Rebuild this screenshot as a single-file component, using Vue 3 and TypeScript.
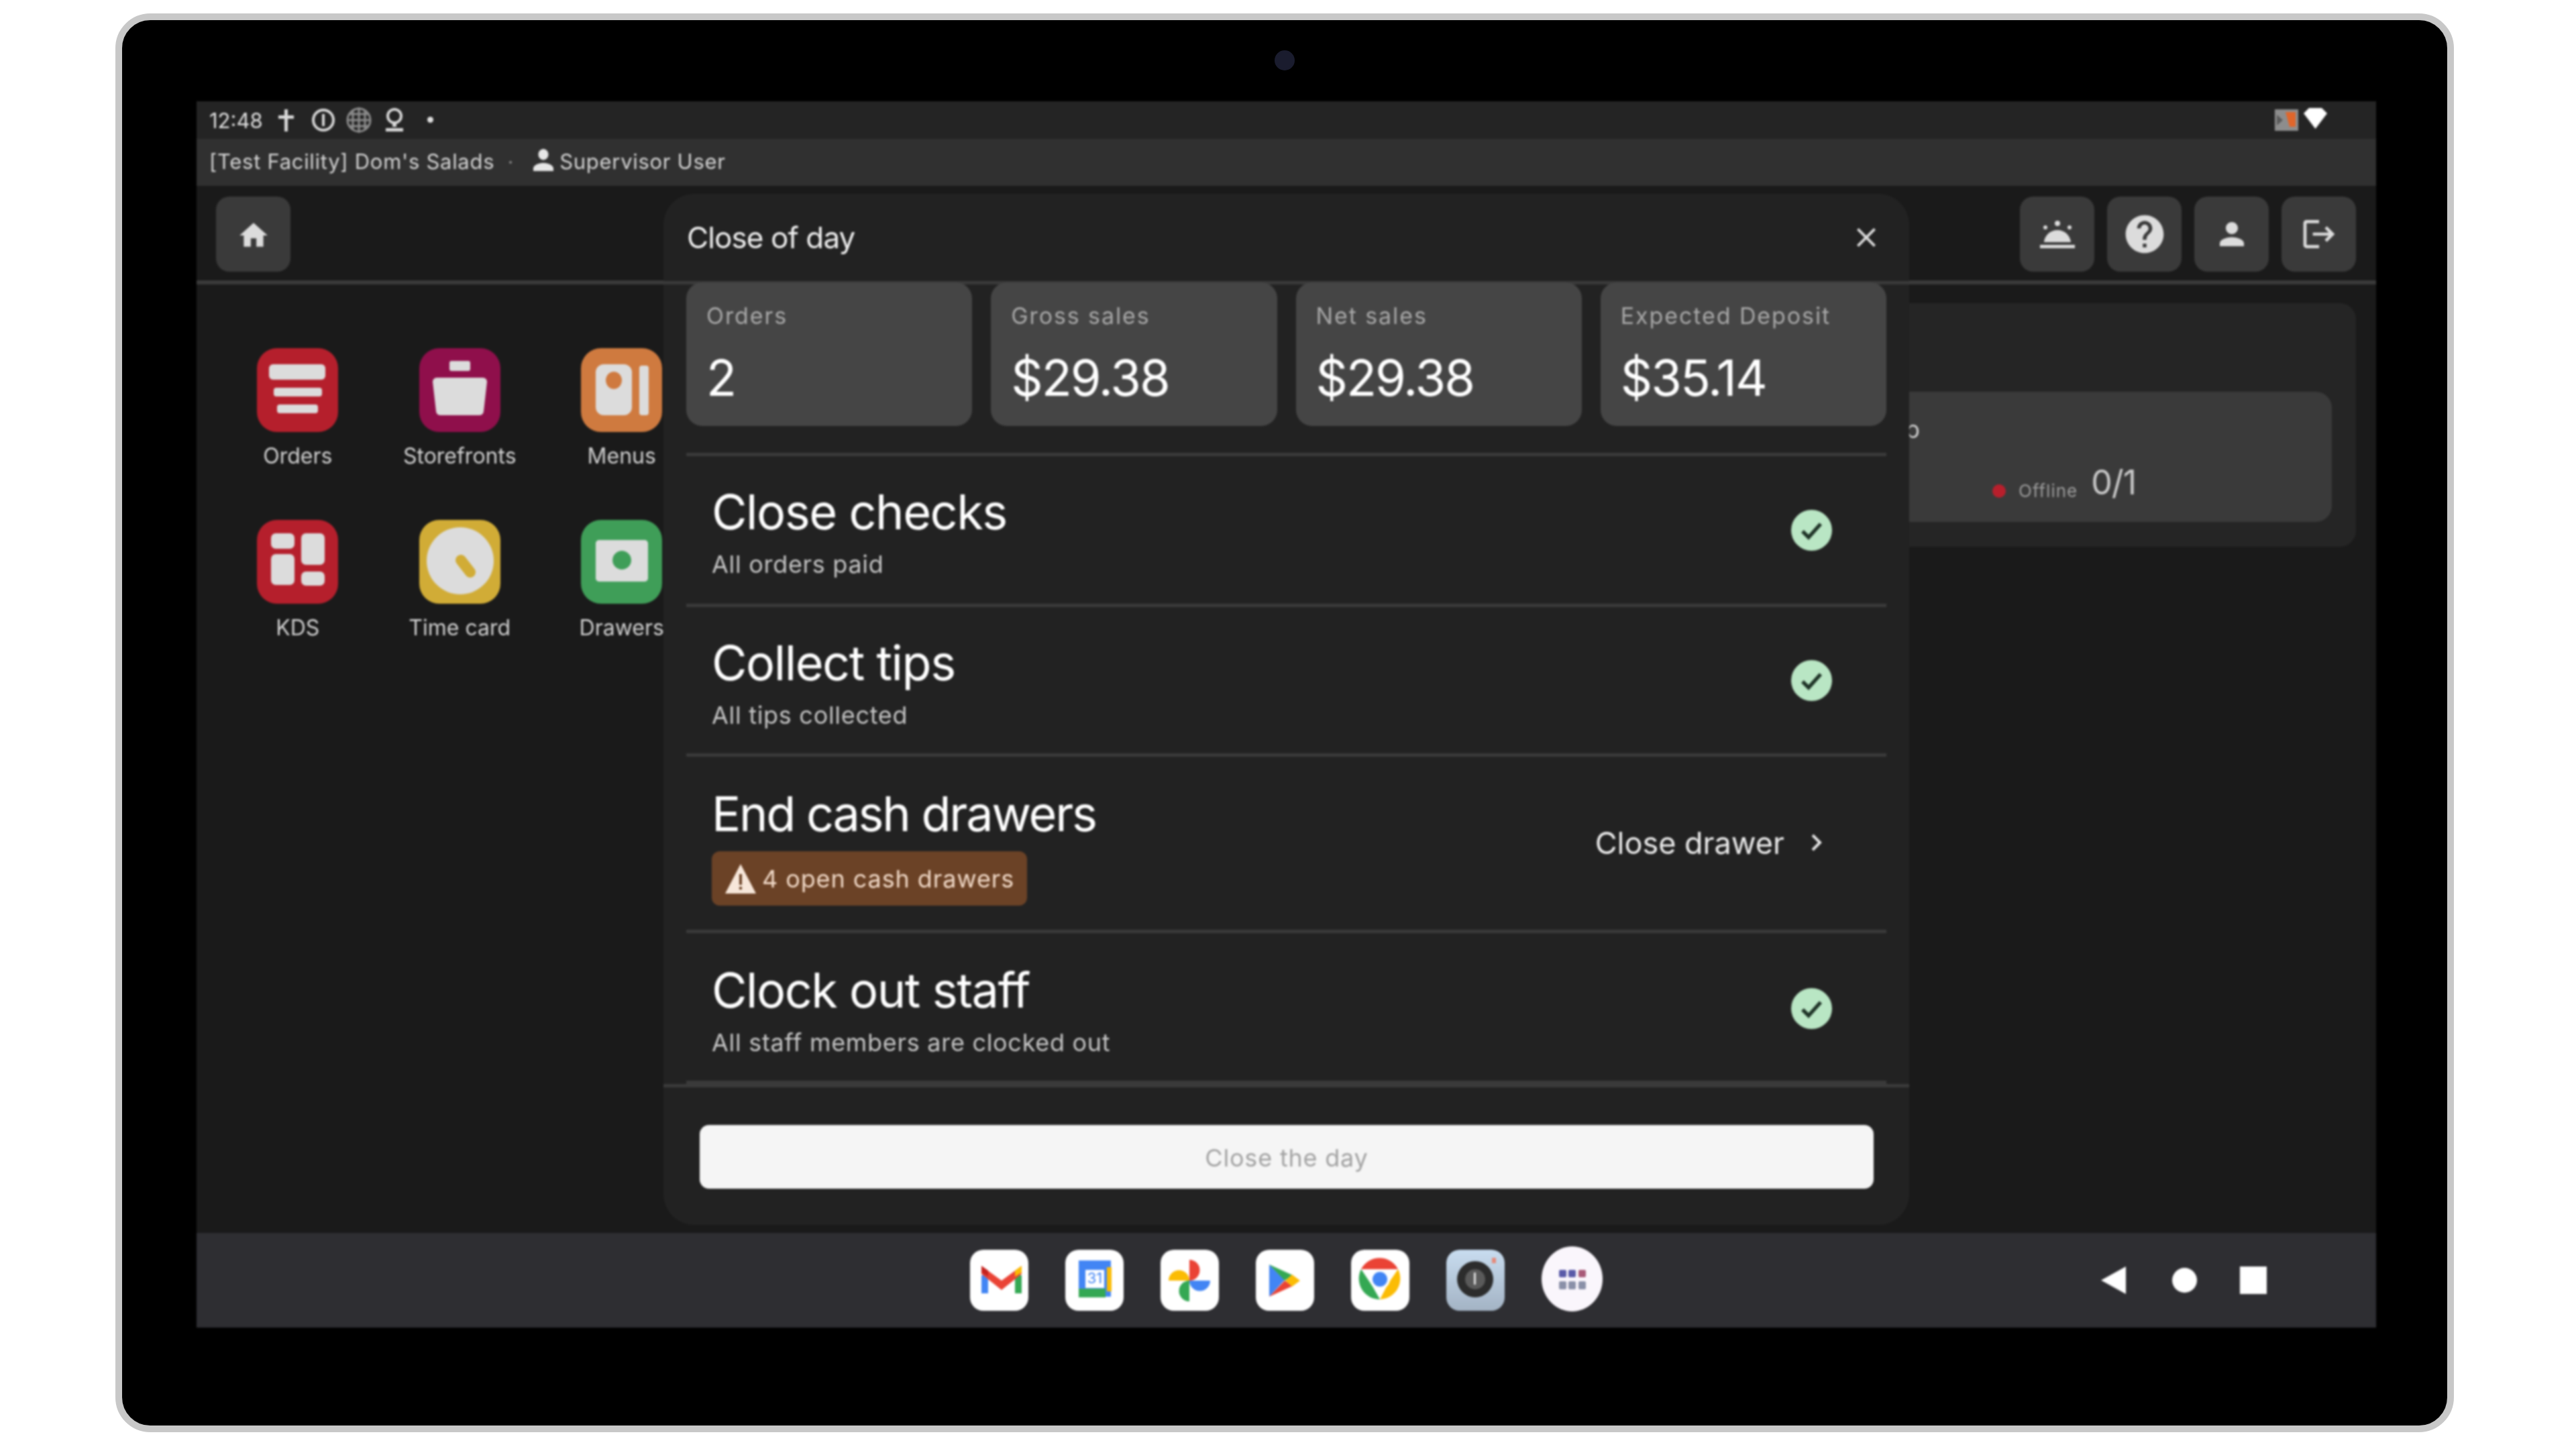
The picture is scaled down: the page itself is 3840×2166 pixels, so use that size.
<script setup lang="ts">
interface Tile { label: string; color: string; kind: string }
const tiles: Tile[] = [
  { label: 'Orders', color: '#b51f2c', kind: 'orders' },
  { label: 'Storefronts', color: '#8f0f4b', kind: 'store' },
  { label: 'Menus', color: '#cf7a3f', kind: 'menus' },
  { label: 'KDS', color: '#b51f2c', kind: 'kds' },
  { label: 'Time card', color: '#d1ac36', kind: 'time' },
  { label: 'Drawers', color: '#3f9e58', kind: 'drawers' },
]
const stats = [
  { label: 'Orders', value: '2' },
  { label: 'Gross sales', value: '$29.38' },
  { label: 'Net sales', value: '$29.38' },
  { label: 'Expected Deposit', value: '$35.14' },
]
const home = 'M10 20v-6h4v6h5v-8h3L12 3 2 12h3v8z'
const person = 'M12 12c2.21 0 4-1.79 4-4s-1.79-4-4-4-4 1.79-4 4 1.79 4 4 4zm0 2c-2.67 0-8 1.34-8 4v2h16v-2c0-2.66-5.33-4-8-4z'
</script>

<template>
  <div class="device">
    <div class="camera-row"><span class="camera"></span></div>
    <div class="screen">
      <div class="status">
        <span class="clock">12:48</span>
        <svg class="s-ic pin" viewBox="0 0 23 33"><path d="M9 0h5v9h9v5h-9v19H9V14H0V9h9z" /></svg>
        <svg class="s-ic ring" viewBox="0 0 36 36"><circle cx="18" cy="18" r="15" fill="none" stroke="#d8d8d8" stroke-width="4" /><path d="M16 9h4v18h-4z" /></svg>
        <svg class="s-ic grid" viewBox="0 0 40 44" stroke="#8c8c8c" stroke-width="3"><circle cx="20" cy="22" r="17" /><path d="M3 22h34M6 13h28M6 31h28M20 3v38M11 7v30M29 7v30" /></svg>
        <svg class="s-ic mic" viewBox="0 0 28 36"><circle cx="14" cy="12" r="10" fill="none" stroke="#d8d8d8" stroke-width="4" /><path d="M11 22h6v6h-6zM1 30h26v5H1z" /></svg>
        <span class="s-dot"></span>
        <span class="s-fill"></span>
        <svg class="s-thumb" viewBox="0 0 35 32"><rect width="35" height="32" fill="#8d8d8d" /><path d="M16 4h15v22H22z" fill="#e0662b" /><path d="M3 8l9 8-9 8z" fill="#5a5a5a" /></svg>
        <svg class="s-wifi" viewBox="0 0 35 31"><path d="M0 8L8 0h19l8 8-17.500 23z" fill="#fff" /></svg>
      </div>
      <div class="context">
        <span>[Test Facility] Dom's Salads</span>
        <span class="ctx-dot"></span>
        <svg class="ctx-person" viewBox="4 4 16 16" preserveAspectRatio="none"><path :d="person" /></svg>
        <span>Supervisor User</span>
      </div>

      <div class="main">
        <nav class="topnav">
          <button class="nav-btn"><svg class="i-home" viewBox="0 0 24 24"><path :d="home" /></svg></button>
          <span class="spacer"></span>
          <button class="nav-btn">
            <svg class="i-bell" viewBox="0 0 52 44"><path d="M0 38h52v5H0zM6 34c1-10 9-18 20-18s19 8 20 18z" /><circle cx="26" cy="6" r="4" /><circle cx="8" cy="12" r="3" /><circle cx="44" cy="12" r="3" /></svg>
          </button>
          <button class="nav-btn">
            <svg class="i-help" viewBox="0 0 24 24"><path d="M12 2C6.480 2 2 6.480 2 12s4.480 10 10 10 10-4.480 10-10S17.520 2 12 2zm1 17h-2v-2h2v2zm2.070-7.750l-.9.920C13.450 12.900 13 13.500 13 15h-2v-.5c0-1.100.45-2.100 1.170-2.830l1.240-1.260c.37-.36.59-.86.59-1.410 0-1.100-.9-2-2-2s-2 .9-2 2H8c0-2.210 1.790-4 4-4s4 1.790 4 4c0 .88-.36 1.680-.93 2.250z" /></svg>
          </button>
          <button class="nav-btn"><svg class="i-person" viewBox="0 0 24 24"><path :d="person" /></svg></button>
          <button class="nav-btn">
            <svg class="i-logout" viewBox="0 0 24 24"><path d="M17 7l-1.410 1.410L18.170 11H8v2h10.170l-2.580 2.580L17 17l5-5zM4 5h8V3H4c-1.100 0-2 .9-2 2v14c0 1.100.9 2 2 2h8v-2H4V5z" /></svg>
          </button>
        </nav>

        <div class="content">
          <div class="apps">
            <div v-for="t in tiles" :key="t.label" class="tile">
              <div class="tile-icon" :style="{ background: t.color }">
                <svg viewBox="0 0 121 125" fill="#dcdcdc">
                  <template v-if="t.kind === 'orders'">
                    <rect x="18" y="24" width="84" height="23" rx="6" /><rect x="25" y="59" width="72" height="13" rx="4" /><rect x="30" y="84" width="61" height="13" rx="4" />
                  </template>
                  <template v-else-if="t.kind === 'store'">
                    <rect x="45" y="19" width="31" height="15" rx="3" /><path d="M26 44h69a6 6 0 0 1 6 6l-5 44a6 6 0 0 1-6 6H31a6 6 0 0 1-6-6l-5-44a6 6 0 0 1 6-6z" />
                  </template>
                  <template v-else-if="t.kind === 'menus'">
                    <path fill-rule="evenodd" d="M34 24h30a12 12 0 0 1 12 12v52a12 12 0 0 1-12 12H34a12 12 0 0 1-12-12V36a12 12 0 0 1 12-12zm15 11a12 13 0 1 0 .01 0z" /><rect x="87" y="26" width="14" height="74" rx="4" />
                  </template>
                  <template v-else-if="t.kind === 'kds'">
                    <rect x="21" y="20" width="35" height="23" rx="7" /><rect x="21" y="51" width="35" height="46" rx="7" /><rect x="66" y="20" width="35" height="47" rx="7" /><rect x="66" y="77" width="35" height="21" rx="7" />
                  </template>
                  <template v-else-if="t.kind === 'time'">
                    <circle cx="61" cy="61" r="50" /><path d="M62 60l14 18" stroke="#d1ac36" stroke-width="16" stroke-linecap="round" />
                  </template>
                  <template v-else>
                    <path fill-rule="evenodd" d="M27 30h68a5 5 0 0 1 5 5v52a5 5 0 0 1-5 5H27a5 5 0 0 1-5-5V35a5 5 0 0 1 5-5zm34 16a14 14 0 1 0 .01 0z" />
                  </template>
                </svg>
              </div>
              <span class="tile-label">{{ t.label }}</span>
            </div>
          </div>
          <section class="panel">
            <div class="lane">
              <span class="lane-name">Shop</span>
              <div class="lane-status">
                <span class="red-dot"></span><span class="offline">Offline</span><span class="count">0/1</span>
              </div>
            </div>
          </section>
        </div>

        <div class="overlay">
          <div class="modal">
            <header class="m-head">
              <h2>Close of day</h2>
              <svg class="i-close" viewBox="5 5 14 14"><path d="M19 6.410L17.590 5 12 10.590 6.410 5 5 6.410 10.590 12 5 17.590 6.410 19 12 13.410 17.590 19 19 17.590 13.410 12z" /></svg>
            </header>
            <div class="m-body">
              <div class="stats">
                <div v-for="s in stats" :key="s.label" class="stat">
                  <span class="stat-label">{{ s.label }}</span>
                  <span class="stat-value">{{ s.value }}</span>
                </div>
              </div>
              <div class="row">
                <div class="row-text"><div class="r-title">Close checks</div><div class="r-sub">All orders paid</div></div>
                <svg class="check" viewBox="0 0 61 61"><circle cx="30.500" cy="30.500" r="30.500" fill="#b9e6c4" /><path d="M17 32l9 9 18-20" fill="none" stroke="#1f3327" stroke-width="5.500" /></svg>
              </div>
              <div class="row row-2">
                <div class="row-text"><div class="r-title">Collect tips</div><div class="r-sub">All tips collected</div></div>
                <svg class="check" viewBox="0 0 61 61"><circle cx="30.500" cy="30.500" r="30.500" fill="#b9e6c4" /><path d="M17 32l9 9 18-20" fill="none" stroke="#1f3327" stroke-width="5.500" /></svg>
              </div>
              <div class="row row-tall">
                <div class="row-text">
                  <div class="r-title end-title">End cash drawers</div>
                  <div class="badge">
                    <svg class="i-warn" viewBox="0 0 46 44"><path d="M23 0l23 44H0z" fill="#f7e7da" /><path d="M21 15h4v16h-4zM21 34h4v4h-4z" fill="#6b4226" /></svg>
                    <span>4 open cash drawers</span>
                  </div>
                </div>
                <div class="drawer-link">
                  <span>Close drawer</span>
                  <svg class="i-chev" viewBox="0 0 17 26"><path d="M2 2l11 11L2 24" fill="none" stroke="#e8e8e8" stroke-width="4" /></svg>
                </div>
              </div>
              <div class="row row-last">
                <div class="row-text"><div class="r-title">Clock out staff</div><div class="r-sub">All staff members are clocked out</div></div>
                <svg class="check" viewBox="0 0 61 61"><circle cx="30.500" cy="30.500" r="30.500" fill="#b9e6c4" /><path d="M17 32l9 9 18-20" fill="none" stroke="#1f3327" stroke-width="5.500" /></svg>
              </div>
            </div>
            <footer class="m-foot"><button class="close-day">Close the day</button></footer>
          </div>
        </div>
      </div>

      <div class="dock">
        <div class="dock-apps">
          <svg class="app" viewBox="0 0 87 91">
            <rect width="87" height="91" rx="20" fill="#fff" />
            <path d="M17 38h10v27H17z" fill="#4285f4" /><path d="M67 38h10v27H67z" fill="#34a853" />
            <path d="M17 24l30 22 30-22v12L47 60 17 36z" fill="#ea4335" />
            <path d="M17 24l10 7v9l-10-6z" fill="#c5221f" /><path d="M77 24l-10 7v9l10-6z" fill="#fbbc04" />
          </svg>
          <svg class="app" viewBox="0 0 87 91">
            <rect width="87" height="91" rx="20" fill="#fff" />
            <rect x="20" y="16" width="48" height="54" fill="#4285f4" />
            <rect x="62" y="26" width="7" height="36" fill="#fbbc04" />
            <rect x="20" y="58" width="40" height="13" fill="#34a853" />
            <rect x="30" y="30" width="28" height="27" fill="#fff" />
            <text x="44" y="50" text-anchor="middle" class="cal-text">31</text>
          </svg>
          <svg class="app" viewBox="0 0 87 91">
            <rect width="87" height="91" rx="20" fill="#fff" />
            <path d="M43 46V15a15.500 15.500 0 0 1 0 31z" fill="#ea4335" />
            <path d="M43 46H12a15.500 15.500 0 0 1 31 0z" fill="#fbbc04" />
            <path d="M43 46v31a15.500 15.500 0 0 1 0-31z" fill="#34a853" />
            <path d="M43 46h31a15.500 15.500 0 0 1-31 0z" fill="#4285f4" />
          </svg>
          <svg class="app" viewBox="0 0 87 91">
            <rect width="87" height="91" rx="20" fill="#fff" />
            <path d="M20 22l23 23-23 25z" fill="#4285f4" />
            <path d="M20 22l35 16-12 8z" fill="#34a853" />
            <path d="M20 70l35-16-12-8z" fill="#ea4335" />
            <path d="M54 37l12 9-12 9-10-9z" fill="#fbbc04" />
          </svg>
          <svg class="app" viewBox="0 0 87 91">
            <rect width="87" height="91" rx="20" fill="#fff" />
            <path d="M43 43m-28-14a31 31 0 0 1 55 0H43z" fill="#ea4335" />
            <path d="M70 29a31 31 0 0 1-27 45l12-23z" fill="#fbbc04" />
            <path d="M43 74a31 31 0 0 1-28-45l16 24z" fill="#34a853" />
            <circle cx="43" cy="44" r="15" fill="#fff" /><circle cx="43" cy="44" r="11" fill="#4285f4" />
          </svg>
          <svg class="app" viewBox="0 0 87 91">
            <defs><linearGradient id="camg" x1="0" y1="0" x2="0" y2="1"><stop offset="0" stop-color="#c8dcef" /><stop offset="1" stop-color="#a3b3c4" /></linearGradient></defs>
            <rect width="87" height="91" rx="20" fill="url(#camg)" />
            <circle cx="43" cy="44" r="27" fill="#2c2c2c" /><circle cx="43" cy="44" r="15" fill="#5a5a5a" /><rect x="41" y="34" width="3" height="18" fill="#ddd" />
            <rect x="68" y="12" width="6" height="8" fill="#e58a7a" />
          </svg>
          <svg class="app app-all" viewBox="0 0 91 97">
            <ellipse cx="45.500" cy="48.500" rx="45.500" ry="48.500" fill="#faf6fc" />
            <rect x="26" y="35" width="11" height="11" rx="2" fill="#5a5aa8" /><rect x="40" y="35" width="11" height="11" rx="2" fill="#5a5aa8" /><rect x="55" y="35" width="11" height="11" rx="2" fill="#a85a78" />
            <rect x="26" y="52" width="11" height="12" rx="2" fill="#8a90a8" /><rect x="40" y="52" width="11" height="12" rx="2" fill="#8a90a8" /><rect x="55" y="52" width="11" height="12" rx="2" fill="#8a90a8" />
          </svg>
        </div>
        <div class="dock-nav">
          <svg class="n-back" viewBox="0 0 37 41"><path d="M37 0v41L0 20.500z" /></svg>
          <span class="n-home"></span>
          <span class="n-recent"></span>
        </div>
      </div>
    </div>
  </div>
</template>

<style>
html, body { margin: 0; background: #fff; }
</style>

<style scoped>
* { box-sizing: border-box; }
.device {
  width: 3486px; height: 2115px; margin: 20px 0 0 172px;
  border: 10px solid #c8c8c8; border-radius: 52px; background: #000;
  padding-left: 111px; font-family: Inter, Roboto, "Liberation Sans", sans-serif;
  color: #e6e6e6;
}
.camera-row { height: 121px; display: flex; align-items: center; justify-content: center; margin-right: 106px; }
.camera { width: 30px; height: 30px; border-radius: 50%; background: #1a1c2e; margin-left: -6px; transform: translateY(-1px); }
.screen { width: 3249px; height: 1828px; display: flex; flex-direction: column; background: #1a1a1a; filter: blur(1.4px); }

.status { height: 56px; background: #242424; display: flex; align-items: center; padding-left: 19px; color: #e0e0e0; }
.clock { font-size: 31px; width: 103px; letter-spacing: 0; }
.s-ic { fill: #d8d8d8; flex: none; }
.pin { width: 23px; height: 33px; }
.ring { width: 36px; height: 36px; margin-left: 26px; }
.grid { width: 40px; height: 44px; margin-left: 15px; fill: none; }
.mic { width: 28px; height: 36px; margin-left: 19px; }
.s-dot { width: 9px; height: 9px; border-radius: 50%; background: #e0e0e0; margin-left: 35px; margin-top: -2px; }
.s-fill { flex: 1; }
.s-thumb { width: 35px; height: 32px; margin-right: 8px; }
.s-wifi { width: 35px; height: 31px; margin-right: 73px; margin-top: -6px; }

.context { height: 70px; background: #303030; display: flex; align-items: center; padding: 0 0 4px 19px; font-size: 31px; color: #d4d4d4; letter-spacing: 0.7px; }
.ctx-dot { width: 4px; height: 4px; background: #888; border-radius: 50%; margin: 4px 32px 0 22px; }
.ctx-person { width: 30px; height: 33px; fill: #e6e6e6; margin-right: 9px; margin-top: -4px; }

.main { flex: 1; position: relative; min-height: 0; display: flex; flex-direction: column; }
.topnav { height: 147px; border-bottom: 6px solid #3a3a3a; display: flex; align-items: flex-start; gap: 19px; padding: 16px 30px 0 29px; }
.spacer { flex: 1; }
.nav-btn { width: 111px; height: 112px; border: 0; border-radius: 20px; background: #3a3a3a; display: flex; align-items: center; justify-content: center; padding: 0; }
.nav-btn svg { fill: #dcdcdc; display: block; }
.i-home { width: 50px; height: 54px; margin-top: 3px; }
.i-bell { width: 52px; height: 44px; }
.i-help { width: 68px; height: 68px; }
.i-person { width: 54px; height: 54px; }
.i-logout { width: 56px; height: 56px; }

.content { flex: 1; display: flex; justify-content: space-between; min-height: 0; }
.apps { display: grid; grid-template-columns: repeat(3, 241.500px); grid-auto-rows: 256px; padding: 95px 0 0 30px; align-content: start; }
.tile { display: flex; flex-direction: column; align-items: center; }
.tile-icon { width: 121px; height: 125px; border-radius: 30px; flex: none; }
.tile-icon svg { width: 100%; height: 100%; display: block; }
.tile-label { font-size: 32px; line-height: 36px; margin-top: 18px; color: #d0d0d0; white-space: nowrap; }

.panel { width: 812px; height: 363px; margin: 28px 30px 0 0; background: #252525; border-radius: 24px; padding: 132px 36px 0; }
.lane { height: 194px; background: #3a3a3a; border-radius: 24px; padding: 38px 0 0 38px; display: flex; flex-direction: column; }
.lane-name { font-size: 36px; line-height: 36px; color: #cfcfcf; }
.lane-status { display: flex; align-items: flex-end; margin: 43px 0 0 196px; height: 44px; }
.red-dot { width: 20px; height: 20px; border-radius: 50%; background: #b81f2c; margin-bottom: 3px; flex: none; }
.offline { font-size: 26px; color: #9c9c9c; margin-left: 19px; letter-spacing: 1px; line-height: 26px; }
.count { font-size: 50px; color: #c8c8c8; margin-left: 20px; line-height: 46px; letter-spacing: -1px; margin-bottom: 3px; }

.overlay { position: absolute; inset: 0; display: flex; justify-content: center; align-items: flex-start; padding-top: 12px; }
.modal { width: 1857px; background: #222; border-radius: 46px; display: flex; flex-direction: column; }
.m-head { height: 135px; border-bottom: 5px solid #3a3a3a; display: flex; align-items: center; justify-content: space-between; padding: 0 49px 0 35px; }
.m-head h2 { margin: 0; font-size: 44px; font-weight: 400; color: #f0f0f0; letter-spacing: -0.9px; }
.i-close { width: 30px; height: 28px; fill: #dcdcdc; }

.m-body { margin: -3px 34px 0; }
.stats { display: grid; grid-template-columns: repeat(4, 1fr); gap: 28px; padding-bottom: 40px; border-bottom: 5px solid #3a3a3a; }
.stat { height: 214px; background: #454545; border-radius: 24px; padding: 28px 30px 0; display: flex; flex-direction: column; }
.stat-label { font-size: 34px; line-height: 44px; color: #a8a8a8; letter-spacing: 1.9px; }
.stat-value { font-size: 74px; line-height: 90px; margin-top: 25px; color: #fff; letter-spacing: -2px; }

.row { height: 225px; border-bottom: 5px solid #3a3a3a; display: flex; align-items: center; justify-content: space-between; padding: 0 81px 0 38px; }
.row-2 { height: 223px; }
.row-tall { height: 263px; padding-right: 95px; }
.row-last { height: 225px; padding-top: 4px; }
.row-text { align-self: flex-start; padding-top: 39px; }
.row-tall .row-text { padding-top: 41px; }
.row-last .row-text { padding-top: 37px; }
.r-title { font-size: 72px; line-height: 88px; color: #fff; letter-spacing: -1.5px; }
.end-title { letter-spacing: -2.3px; }
.r-sub { font-size: 36px; line-height: 40px; margin-top: 14px; color: #c4c4c4; letter-spacing: 0.7px; }
.check { width: 61px; height: 61px; flex: none; }
.badge { margin-top: 12px; width: 470px; height: 81px; border-radius: 12px; background: #6b4226; display: flex; align-items: center; padding-left: 20px; color: #f1d9c7; font-size: 36px; letter-spacing: 0.9px; }
.i-warn { width: 46px; height: 44px; margin-right: 9px; flex: none; }
.drawer-link { display: flex; align-items: center; font-size: 45px; color: #ececec; margin-top: -2px; }
.i-chev { width: 17px; height: 26px; margin-left: 40px; }

.m-foot { border-top: 5px solid #3a3a3a; padding: 56px 53px 54px 54px; }
.close-day { display: block; width: 100%; height: 95px; border: 0; border-radius: 14px; background: #f5f5f5; color: #a2a2a2; font: 36px Inter, Roboto, sans-serif; letter-spacing: 0.8px; padding: 3px 0 0; }

.dock { height: 141px; background: #2e2e32; display: flex; position: relative; }
.dock-apps { display: flex; align-items: center; gap: 55px; padding-left: 1153px; }
.app { width: 87px; height: 91px; flex: none; display: block; }
.app-all { width: 91px; height: 97px; margin-top: -4px; }
.cal-text { font: 22px Inter, Roboto, sans-serif; fill: #4285f4; }
.dock-nav { display: flex; align-items: center; margin-left: 743px; }
.n-back { width: 37px; height: 41px; fill: #fff; }
.n-home { width: 37px; height: 37px; border-radius: 50%; background: #fff; margin-left: 69px; }
.n-recent { width: 40px; height: 41px; background: #fff; margin-left: 64px; }
</style>
